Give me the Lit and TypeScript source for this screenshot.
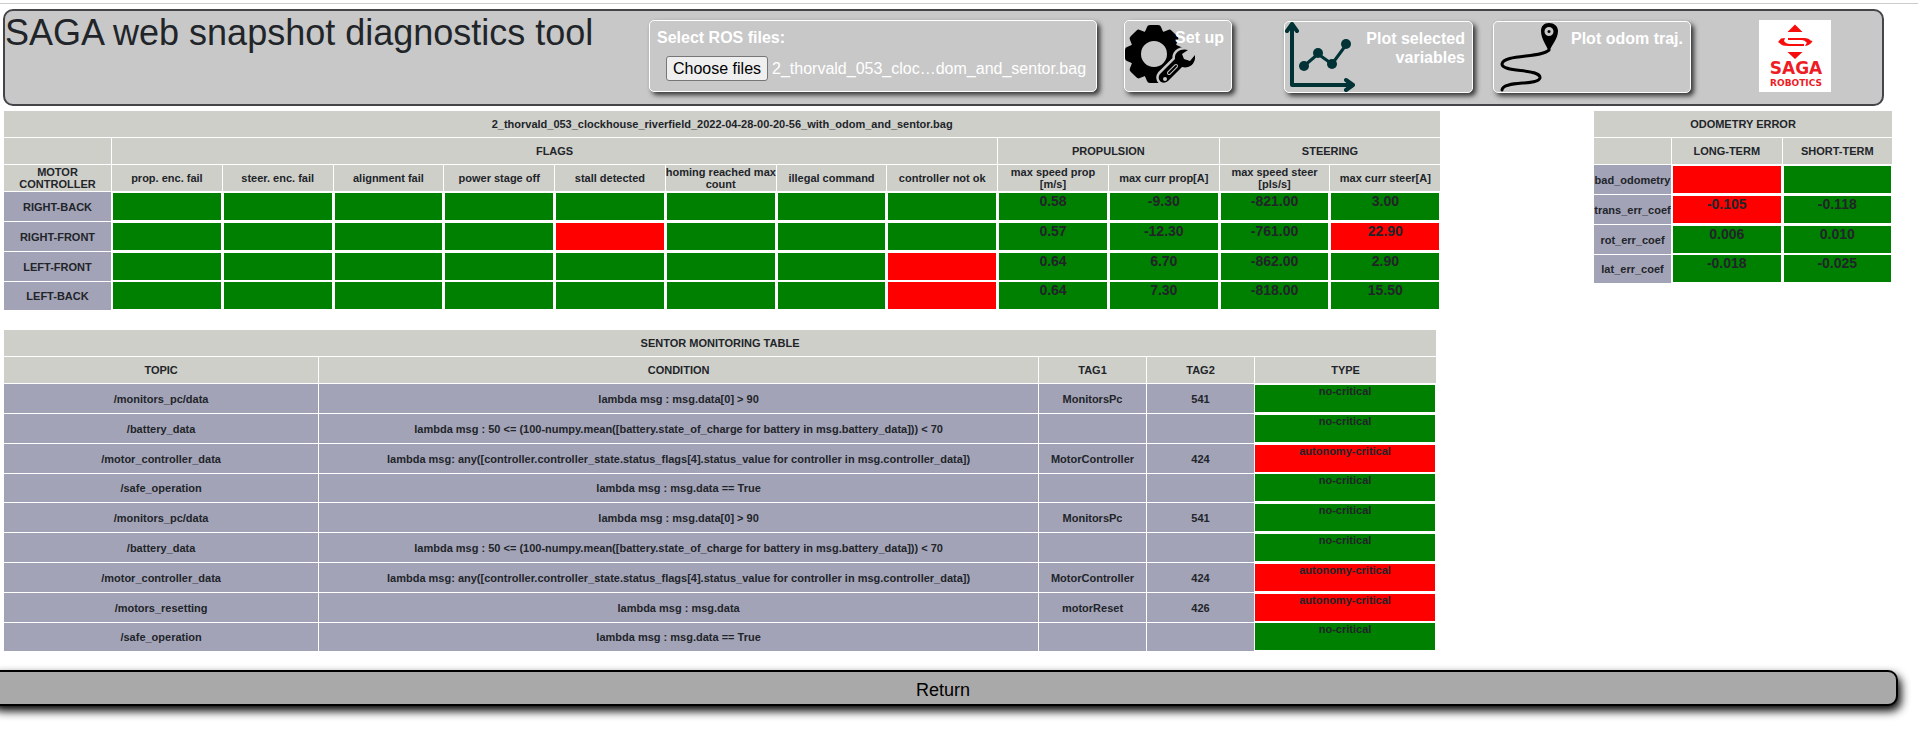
import { LitElement, html, css, nothing } from "lit";
import { customElement, query, state } from "lit/decorators.js";
import { classMap } from "lit/directives/class-map.js";

interface Cell {
  text?: string;
  bad?: boolean;
}

const ok = (text = ""): Cell => ({ text });
const bad = (text = ""): Cell => ({ text, bad: true });
const oks = (n: number): Cell[] => Array.from({ length: n }, () => ok());

const FLAGS = [
  "prop. enc. fail",
  "steer. enc. fail",
  "alignment fail",
  "power stage off",
  "stall detected",
  "homing reached max\ncount",
  "illegal command",
  "controller not ok",
  "max speed prop\n[m/s]",
  "max curr prop[A]",
  "max speed steer\n[pls/s]",
  "max curr steer[A]",
];

const MOTORS: { name: string; cells: Cell[] }[] = [
  { name: "RIGHT-BACK", cells: [...oks(8), ok("0.58"), ok("-9.30"), ok("-821.00"), ok("3.00")] },
  {
    name: "RIGHT-FRONT",
    cells: [...oks(4), bad(), ...oks(3), ok("0.57"), ok("-12.30"), ok("-761.00"), bad("22.90")],
  },
  { name: "LEFT-FRONT", cells: [...oks(7), bad(), ok("0.64"), ok("6.70"), ok("-862.00"), ok("2.90")] },
  { name: "LEFT-BACK", cells: [...oks(7), bad(), ok("0.64"), ok("7.30"), ok("-818.00"), ok("15.50")] },
];

const ODOMETRY: { name: string; cells: Cell[] }[] = [
  { name: "bad_odometry", cells: [bad(), ok()] },
  { name: "trans_err_coef", cells: [bad("-0.105"), ok("-0.118")] },
  { name: "rot_err_coef", cells: [ok("0.006"), ok("0.010")] },
  { name: "lat_err_coef", cells: [ok("-0.018"), ok("-0.025")] },
];

const BATTERY =
  "lambda msg : 50 <= (100-numpy.mean([battery.state_of_charge for battery in msg.battery_data])) < 70";
const CONTROLLER =
  "lambda msg: any([controller.controller_state.status_flags[4].status_value for controller in msg.controller_data])";

const SENTOR: [string, string, string, string, boolean][] = [
  ["/monitors_pc/data", "lambda msg : msg.data[0] > 90", "MonitorsPc", "541", false],
  ["/battery_data", BATTERY, "", "", false],
  ["/motor_controller_data", CONTROLLER, "MotorController", "424", true],
  ["/safe_operation", "lambda msg : msg.data == True", "", "", false],
  ["/monitors_pc/data", "lambda msg : msg.data[0] > 90", "MonitorsPc", "541", false],
  ["/battery_data", BATTERY, "", "", false],
  ["/motor_controller_data", CONTROLLER, "MotorController", "424", true],
  ["/motors_resetting", "lambda msg : msg.data", "motorReset", "426", true],
  ["/safe_operation", "lambda msg : msg.data == True", "", "", false],
];

const gearIcon = html`<svg class="icon" viewBox="0 0 70 70" aria-hidden="true">
  <g transform="translate(29 33)">
    <path
      id="tooth"
      d="M-10-20 -7-27Q-6.500-29-4-29H4Q6.500-29 7-27L10-20Z"
    />
    <use href="#tooth" transform="rotate(45)" />
    <use href="#tooth" transform="rotate(90)" />
    <use href="#tooth" transform="rotate(180)" />
    <use href="#tooth" transform="rotate(225)" />
    <use href="#tooth" transform="rotate(270)" />
    <use href="#tooth" transform="rotate(315)" />
    <circle r="18.500" fill="none" stroke="#000" stroke-width="11" />
  </g>
  <path
    d="M63 29C56 27 49 31 50 38L35 53C31 58 37 65 43 60L57 46C65 48 71 42 70 34L65 40 59 38 57 33Z"
    stroke="#c8c8c8"
    stroke-width="5"
    paint-order="stroke"
  />
  <path d="M44 52L51 45" fill="none" stroke="#c8c8c8" stroke-width="4" stroke-linecap="round" />
  <path d="M44 52L51 45" fill="none" stroke="#000" stroke-width="2" stroke-linecap="round" />
  <circle cx="40" cy="58" r="2" fill="#c8c8c8" />
</svg>`;

const chartIcon = html`<svg class="icon" viewBox="0 0 70 70" aria-hidden="true">
  <g fill="none" stroke="#003236" stroke-width="4" stroke-linecap="round" stroke-linejoin="round">
    <path d="M7 2V63H68M2 9L7 2 12 9M61 58L68 63 61 68" />
    <path d="M19 44L33 32 47 42 61 23" stroke-width="3" />
  </g>
  <g fill="#003236">
    <circle cx="19" cy="44" r="5" />
    <circle cx="33" cy="31" r="5" />
    <circle cx="47" cy="42" r="5" />
    <circle cx="61" cy="22" r="5" />
  </g>
</svg>`;

const routeIcon = html`<svg class="icon" viewBox="0 0 70 70" aria-hidden="true">
  <path
    d="M55 28C48 36 9 32 8 42C8 51 47 46 46 56C44 64 9 58 8 68"
    fill="none"
    stroke="#000"
    stroke-width="3"
    stroke-linecap="round"
  />
  <path
    fill-rule="evenodd"
    d="M55 30C52 22 47 17 47 9C47 4 50 1 55 1C60 1 64 4 64 9C64 17 58 22 55 30ZM55 5A4.500 4.500 0 1 0 55 14A4.500 4.500 0 1 0 55 5Z"
  />
  <circle cx="55" cy="9.500" r="1.500" />
</svg>`;

const sagaLogo = html`<svg class="logo" viewBox="0 0 72 72" role="img" aria-label="SAGA Robotics">
  <rect width="72" height="72" fill="#fff" />
  <g fill="#f80d0d">
    <path d="M36 4.500L43.500 12H28.500ZM36 39L28.500 32H43.500Z" />
    <path d="M29 18H45Q50 18 51.500 20.500L53.500 21L51 23.500L47.500 22.500Q46 20 43 20H29Z" />
    <path d="M45 26H29Q23 26 21 23.500L19 22L22 18.500L26 18L25 21Q27 24 31 24H45Z" />
    <path d="M53.500 21Q51 25.500 46 26L48.500 21.500Z" />
  </g>
  <text class="saga" x="37" y="54" text-anchor="middle" fill="#ee1c25">SAGA</text>
  <text class="robotics" x="37" y="66" text-anchor="middle" fill="#ee1c25">ROBOTICS</text>
</svg>`;

@customElement("app-root")
export class AppRoot extends LitElement {
  @state() private fileName = "2_thorvald_053_cloc…dom_and_sentor.bag";
  @query("#ros-files") private picker!: HTMLInputElement;

  static styles = css`
    :host {
      display: block;
      font-family: "Liberation Sans", Arial, sans-serif;
      color: #212529;
      background: #fff;
      overflow: hidden;
    }
    .rule {
      height: 1px;
      margin: 3px 0 5px;
      border: 0;
      background: #ccc;
    }
    .bar {
      display: grid;
      grid-template-columns: 644fr 475fr 160fr 209fr 266fr 123fr;
      align-items: start;
      margin: 0 34px 0 3px;
      padding-bottom: 11px;
      border: 2px solid #444449;
      border-radius: 10px;
      background: #c8c8c8;
    }
    h1 {
      margin: 0;
      font-size: 36px;
      font-weight: 400;
      line-height: 43px;
      white-space: nowrap;
    }
    .card {
      box-sizing: border-box;
      height: 72px;
      margin: 9px 0 0;
      padding: 7px;
      border: 1px solid #fff;
      border-radius: 5px;
      background: #c8c8c8;
      box-shadow: 3px 3px 5px #333;
      color: #fff;
      font: bold 16px/19px "Liberation Sans", Arial, sans-serif;
    }
    .files {
      width: 448px;
    }
    .tool {
      position: relative;
      display: flex;
      align-items: flex-start;
      justify-content: flex-end;
      text-align: right;
      cursor: pointer;
    }
    .tool .icon {
      position: absolute;
      top: 0;
      left: 0;
      width: 70px;
      height: 70px;
    }
    .tool span {
      position: relative;
    }
    .setup {
      width: 108px;
    }
    .plot {
      width: 189px;
      margin-top: 10px;
      padding-left: 72px;
    }
    .odom {
      width: 198px;
      margin-top: 10px;
    }
    .picker {
      display: flex;
      align-items: center;
      gap: 4px;
      margin: 9px 0 0 9px;
      font-weight: 400;
      white-space: nowrap;
    }
    .choose {
      height: 25px;
      padding: 0 6px;
      border: 1px solid #767676;
      border-radius: 3px;
      background: #efefef;
      color: #000;
      font: 16px/19px "Liberation Sans", Arial, sans-serif;
    }
    .logo {
      width: 72px;
      height: 72px;
      margin-top: 9px;
    }
    .saga {
      font: bold 17px "DejaVu Sans", sans-serif;
    }
    .robotics {
      font: bold 9px "DejaVu Sans", sans-serif;
    }
    .tables {
      display: flex;
      align-items: flex-start;
      justify-content: space-between;
      margin: 4px 25px 0 3px;
    }
    table {
      table-layout: fixed;
      border-collapse: separate;
      border-spacing: 1px;
      font-size: 11px;
      font-weight: 700;
      line-height: 12px;
      text-align: center;
    }
    .motors {
      width: 76.1%;
    }
    .odometry {
      width: 300px;
    }
    .sentor {
      width: 74.77%;
      margin: 18px 0 0 3px;
    }
    th,
    td {
      box-sizing: border-box;
      height: 29px;
      padding: 0;
      background: #a3a3b7;
      vertical-align: middle;
    }
    thead th {
      height: 26px;
      background: #cfcfca;
    }
    .flag {
      white-space: pre;
    }
    tbody tr:nth-child(5n + 4) > * {
      height: 28px;
    }
    .status {
      border: 1px solid #fff;
      background: green;
      vertical-align: top;
    }
    tbody tr:nth-child(5n + 4) > .status {
      border-top-width: 0;
    }
    .status.bad {
      background: red;
    }
    .value {
      font-size: 14px;
      line-height: 16px;
    }
    .type {
      border-left-width: 0;
    }
    .c-name {
      width: 107px;
    }
    .c-odom {
      width: 77px;
    }
    .c-topic {
      width: 22%;
    }
    .c-tag {
      width: 107px;
    }
    .c-type {
      width: 181px;
    }
    .return {
      display: block;
      box-sizing: border-box;
      width: calc(100% - 8px);
      height: 36px;
      margin: 18px 0 28px -12px;
      padding: 4px 0 0;
      border: 2px solid #000;
      border-radius: 10px;
      background: #a9a9a9;
      box-shadow: 3px 5px 10px #000;
      color: #000;
      font: 18px/20px "Liberation Sans", Arial, sans-serif;
    }
  `;

  private onPick() {
    const file = this.picker.files?.[0];
    if (file) this.fileName = file.name;
  }

  private valueCell(cell: Cell) {
    return html`<td class=${classMap({ status: true, value: true, bad: !!cell.bad })}>
      ${cell.text || nothing}
    </td>`;
  }

  private rows(rows: { name: string; cells: Cell[] }[]) {
    return rows.map(
      (row) => html`<tr>
        <th scope="row">${row.name}</th>
        ${row.cells.map((cell) => this.valueCell(cell))}
      </tr>`,
    );
  }

  render() {
    return html`
      <hr class="rule" />
      <header class="bar">
        <h1>SAGA web snapshot diagnostics tool</h1>
        <div class="card files">
          <label for="ros-files">Select ROS files:</label>
          <div class="picker">
            <input id="ros-files" type="file" multiple hidden @change=${this.onPick} />
            <button class="choose" type="button" @click=${() => this.picker.click()}>Choose files</button>
            <span>${this.fileName}</span>
          </div>
        </div>
        <button class="card tool setup" type="button">${gearIcon}<span>Set up</span></button>
        <button class="card tool plot" type="button">${chartIcon}<span>Plot selected variables</span></button>
        <button class="card tool odom" type="button">${routeIcon}<span>Plot odom traj.</span></button>
        ${sagaLogo}
      </header>
      <div class="tables">
        <table class="motors">
          <colgroup>
            <col class="c-name" />
            <col span="12" />
          </colgroup>
          <thead>
            <tr>
              <th colspan="13">2_thorvald_053_clockhouse_riverfield_2022-04-28-00-20-56_with_odom_and_sentor.bag</th>
            </tr>
            <tr>
              <th></th>
              <th colspan="8">FLAGS</th>
              <th colspan="2">PROPULSION</th>
              <th colspan="2">STEERING</th>
            </tr>
            <tr>
              <th>MOTOR CONTROLLER</th>
              ${FLAGS.map((flag) => html`<th class="flag">${flag}</th>`)}
            </tr>
          </thead>
          <tbody>
            ${this.rows(MOTORS)}
          </tbody>
        </table>
        <table class="odometry">
          <colgroup>
            <col class="c-odom" />
            <col span="2" />
          </colgroup>
          <thead>
            <tr>
              <th colspan="3">ODOMETRY ERROR</th>
            </tr>
            <tr>
              <th></th>
              <th>LONG-TERM</th>
              <th>SHORT-TERM</th>
            </tr>
          </thead>
          <tbody>
            ${this.rows(ODOMETRY)}
          </tbody>
        </table>
      </div>
      <table class="sentor">
        <colgroup>
          <col class="c-topic" />
          <col />
          <col class="c-tag" span="2" />
          <col class="c-type" />
        </colgroup>
        <thead>
          <tr>
            <th colspan="5">SENTOR MONITORING TABLE</th>
          </tr>
          <tr>
            <th>TOPIC</th>
            <th>CONDITION</th>
            <th>TAG1</th>
            <th>TAG2</th>
            <th>TYPE</th>
          </tr>
        </thead>
        <tbody>
          ${SENTOR.map(
            ([topic, condition, tag1, tag2, critical]) => html`<tr>
              <td>${topic}</td>
              <td>${condition}</td>
              <td>${tag1}</td>
              <td>${tag2}</td>
              <td class=${classMap({ status: true, type: true, bad: critical })}>
                ${critical ? "autonomy-critical" : "no-critical"}
              </td>
            </tr>`,
          )}
        </tbody>
      </table>
      <button class="return" type="button">Return</button>
    `;
  }
}
